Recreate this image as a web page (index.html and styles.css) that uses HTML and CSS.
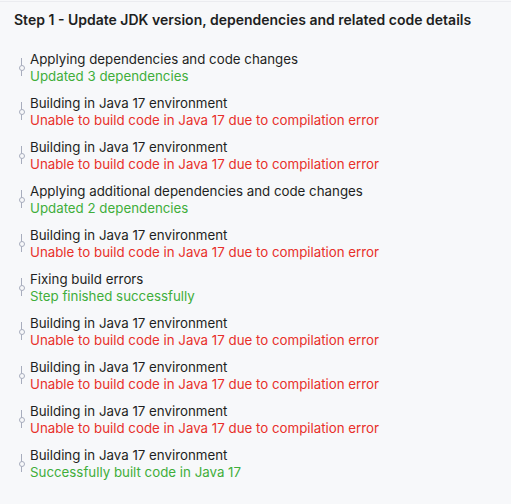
FILE: index.html
```html
<!DOCTYPE html>
<html>
<head>
<meta charset="utf-8">
<link rel="stylesheet" href="styles.css">
</head>
<body>
<div class="panel">
  <h1 class="title">Step 1 - Update JDK version, dependencies and related code details</h1>
  <ul class="steps">
    <li class="step"><span class="icon"></span><div class="text"><div class="name">Applying dependencies and code changes</div><div class="status ok">Updated 3 dependencies</div></div></li>
    <li class="step"><span class="icon"></span><div class="text"><div class="name">Building in Java 17 environment</div><div class="status err">Unable to build code in Java 17 due to compilation error</div></div></li>
    <li class="step"><span class="icon"></span><div class="text"><div class="name">Building in Java 17 environment</div><div class="status err">Unable to build code in Java 17 due to compilation error</div></div></li>
    <li class="step"><span class="icon"></span><div class="text"><div class="name">Applying additional dependencies and code changes</div><div class="status ok">Updated 2 dependencies</div></div></li>
    <li class="step"><span class="icon"></span><div class="text"><div class="name">Building in Java 17 environment</div><div class="status err">Unable to build code in Java 17 due to compilation error</div></div></li>
    <li class="step"><span class="icon"></span><div class="text"><div class="name">Fixing build errors</div><div class="status ok">Step finished successfully</div></div></li>
    <li class="step"><span class="icon"></span><div class="text"><div class="name">Building in Java 17 environment</div><div class="status err">Unable to build code in Java 17 due to compilation error</div></div></li>
    <li class="step"><span class="icon"></span><div class="text"><div class="name">Building in Java 17 environment</div><div class="status err">Unable to build code in Java 17 due to compilation error</div></div></li>
    <li class="step"><span class="icon"></span><div class="text"><div class="name">Building in Java 17 environment</div><div class="status err">Unable to build code in Java 17 due to compilation error</div></div></li>
    <li class="step"><span class="icon"></span><div class="text"><div class="name">Building in Java 17 environment</div><div class="status ok">Successfully built code in Java 17</div></div></li>
  </ul>
</div>
</body>
</html>
```
FILE: styles.css
```css
html, body {
  margin: 0;
  padding: 0;
  background: #f7f8fa;
}
body {
  font-family: Inter, "Noto Sans", sans-serif;
  font-size: 13.3px;
  color: #1e1f22;
}
.panel {
  margin-top: 1px;
  border-top: 1px solid #ebecf0;
  padding: 9px 14px 0 14px;
}
.title {
  margin: 0;
  font-size: 14px;
  font-weight: 600;
  line-height: 17px;
  color: #1e1f22;
}
.steps {
  list-style: none;
  margin: 23px 0 0 0;
  padding: 0;
  display: flex;
  flex-direction: column;
  gap: 10px;
}
.step {
  display: flex;
  align-items: flex-start;
}
.icon {
  position: relative;
  width: 6px;
  height: 18px;
  margin: 7px 5px 0 5px;
  flex: none;
}
.icon::before {
  content: "";
  position: absolute;
  left: 2px;
  top: 0;
  width: 1px;
  height: 18px;
  background: #a8adbd;
}
.icon::after {
  content: "";
  position: absolute;
  left: -0.5px;
  top: 6.5px;
  width: 4px;
  height: 4px;
  border: 1px solid #a8adbd;
  border-radius: 50%;
  background: #f7f8fa;
}
.text {
  line-height: 17px;
}
.status.ok { color: #3fae3a; }
.status.err { color: #e8302a; }
```
